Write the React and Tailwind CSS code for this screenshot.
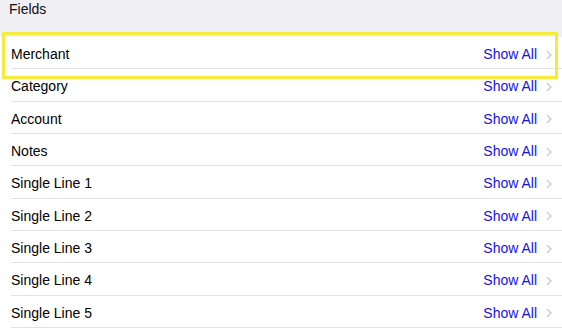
const fields = [
  "Merchant",
  "Category",
  "Account",
  "Notes",
  "Single Line 1",
  "Single Line 2",
  "Single Line 3",
  "Single Line 4",
  "Single Line 5",
];

function Chevron() {
  return (
    <svg width="6" height="10" viewBox="0 0 6 10" className="shrink-0">
      <path d="M1 1l4 4-4 4" fill="none" stroke="#c7c7cc" strokeWidth="1.2" />
    </svg>
  );
}

export default function App() {
  return (
    <div className="relative w-[562px] h-[329px] overflow-hidden bg-white font-['Liberation_Sans',Arial,sans-serif] text-[14px] text-black">
      <div className="h-[37px] bg-[#efeff4] pl-[9px] pt-[1px] leading-[16px] text-[#111]">Fields</div>
      <div className="pl-[11px]">
        {fields.map((f) => (
          <div key={f} className="h-[32.33px] flex items-center border-b border-[#e2e2e4] pr-[10px] pt-[4px]">
            <span className="flex-1">{f}</span>
            <span className="text-[#1212f0] mr-[9px]">Show All</span>
            <Chevron />
          </div>
        ))}
      </div>
      <div className="absolute left-[2px] top-[32px] w-[556px] h-[47px] border-[3px] border-[#f6ea3c]" />
    </div>
  );
}
